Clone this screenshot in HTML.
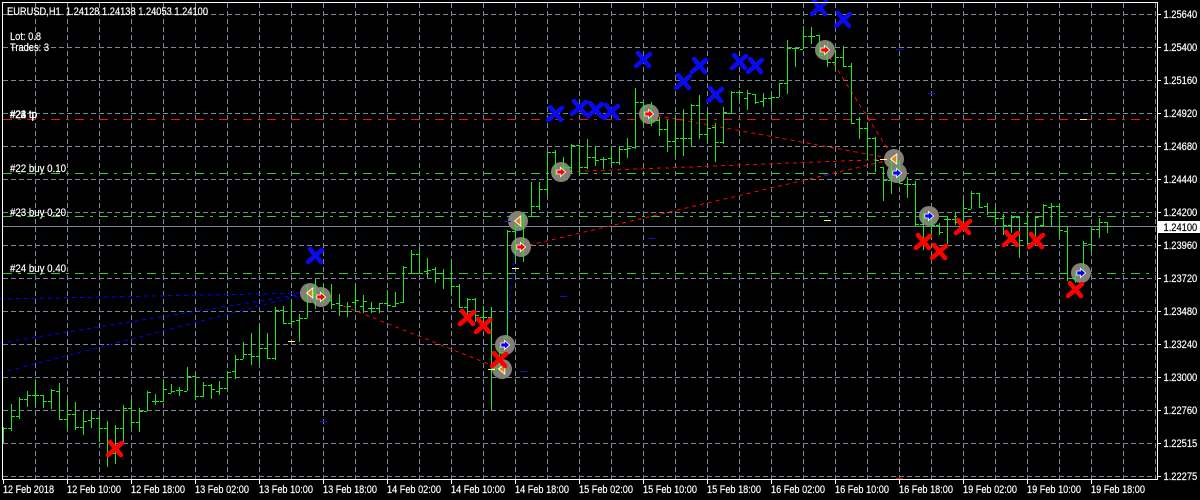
<!DOCTYPE html>
<html><head><meta charset="utf-8"><title>EURUSD,H1</title>
<style>
html,body{margin:0;padding:0;background:#000;width:1200px;height:500px;overflow:hidden}
svg{display:block}
text{font-family:"Liberation Sans",sans-serif;font-size:11px;fill:#fff;stroke:#fff;stroke-width:.2}
</style></head><body>
<svg xmlns="http://www.w3.org/2000/svg" width="1200" height="500" viewBox="0 0 1200 500">
<rect width="1200" height="500" fill="#000"/>
<defs>
<g id="xm"><path d="M-5,-7L6,6M7,-6L-7,6" fill="none" stroke-width="4.6" stroke-linecap="round"/></g>
<circle id="cc" r="10" fill="#857f76"/>
<path id="ra" d="M-4.2,-2H-0.5V-4.6L4.6,0L-0.5,4.6V2H-4.2Z" stroke="#fff" stroke-width="0.8"/>
<path id="la" d="M-3.4,0L2.8,-5V5Z" fill="#d98a10" stroke="#fff" stroke-width="0.9"/>
</defs>
<!-- grid -->
<g stroke="#778899" stroke-width="1" stroke-dasharray="5 3" shape-rendering="crispEdges" fill="none">
<path d="M3 14.5H1156M3 47.5H1156M3 80.5H1156M3 113.5H1156M3 146.5H1156M3 179.5H1156M3 212.5H1156M3 245.5H1156M3 278.5H1156M3 311.5H1156M3 344.5H1156M3 377.5H1156M3 410.5H1156M3 443.5H1156M3 476.5H1156"/>
<path d="M35.5 3V479M67.5 3V479M99.5 3V479M131.5 3V479M163.5 3V479M195.5 3V479M227.5 3V479M259.5 3V479M291.5 3V479M323.5 3V479M355.5 3V479M387.5 3V479M419.5 3V479M451.5 3V479M483.5 3V479M515.5 3V479M547.5 3V479M579.5 3V479M611.5 3V479M643.5 3V479M675.5 3V479M707.5 3V479M739.5 3V479M771.5 3V479M803.5 3V479M835.5 3V479M867.5 3V479M899.5 3V479M931.5 3V479M963.5 3V479M995.5 3V479M1027.5 3V479M1059.5 3V479M1091.5 3V479M1123.5 3V479M1155.5 3V479"/>
</g>
<!-- level lines -->
<g fill="none" stroke-width="1" shape-rendering="crispEdges" stroke-dasharray="9 6 3 6">
<path d="M3 119.5H1156" stroke="#f01010"/>
<path d="M3 173.5H1156M3 216.5H1156M3 273.5H1156" stroke="#32cd32"/>
</g>
<path d="M3 226.5H1157" stroke="#778899" fill="none" shape-rendering="crispEdges"/>
<!-- trend lines -->
<g fill="none" stroke-width="1" stroke-dasharray="4 4" shape-rendering="crispEdges">
<path stroke="#0000ff" d="M0 373L309 293M0 343L309 293M0 299L309 293M505 345L518 221"/>
<path stroke="#ff0000" d="M321 297L501 369M521 247L894 159M561 172L894 159M649 114L894 159M825 50L894 159"/>
</g>
<!-- marker discs -->
<use href="#cc" x="310" y="293"/><use href="#cc" x="321" y="297"/><use href="#cc" x="518" y="221"/><use href="#cc" x="521" y="247"/><use href="#cc" x="505" y="345"/><use href="#cc" x="502" y="369"/><use href="#cc" x="561" y="172"/><use href="#cc" x="649" y="114"/><use href="#cc" x="825" y="50"/><use href="#cc" x="894" y="159"/><use href="#cc" x="897" y="173"/><use href="#cc" x="929" y="216"/><use href="#cc" x="1081" y="273"/>
<!-- bars -->
<path fill="none" stroke="#1fe61f" stroke-width="1" shape-rendering="crispEdges" d="
M3.5 427V443M3.5 428.5H7
M11.5 404V431M8 428.5H11M11 416.5H15
M19.5 397V419M16 416.5H19M19 399.5H23
M27.5 391V407M24 399.5H27M27 395.5H31
M35.5 381V407M32 395.5H35M35 395.5H39
M43.5 395V408M40 395.5H43M43 401.5H47
M51.5 389V409M48 401.5H51M51 390.5H55
M59.5 383V419M56 391.5H59M59 419.5H63
M67.5 399V430M64 419.5H67M67 414.5H71
M75.5 402V430M72 414.5H75M75 427.5H79
M83.5 411V435M80 427.5H83M83 421.5H87
M91.5 411V428M88 420.5H91M91 418.5H95
M99.5 416V442M96 418.5H99M99 428.5H103
M107.5 421V467M104 428.5H107M107 443.5H111
M115.5 425V464M112 453.5H115M115 428.5H119
M123.5 405V443M120 428.5H123M123 408.5H127
M131.5 399V427M128 408.5H131M131 422.5H135
M139.5 408V432M136 422.5H139M139 411.5H143
M147.5 391V411M144 411.5H147M147 392.5H151
M155.5 394V405M152 401.5H155M155 401.5H159
M163.5 380V402M160 401.5H163M163 389.5H167
M171.5 384V393M168 393.5H171M171 391.5H175
M179.5 387V396M176 390.5H179M179 390.5H183
M187.5 367V391M184 391.5H187M187 376.5H191
M195.5 374V400M192 376.5H195M195 396.5H199
M203.5 382V397M200 396.5H203M203 385.5H207
M211.5 384V399M208 385.5H211M211 389.5H215
M219.5 381V395M216 391.5H219M219 388.5H223
M227.5 371V388M224 388.5H227M227 372.5H231
M235.5 355V379M232 371.5H235M235 359.5H239
M243.5 342V359M240 359.5H243M243 354.5H247
M251.5 333V365M248 354.5H251M251 356.5H255
M259.5 325V364M256 356.5H259M259 348.5H263
M267.5 333V359M264 348.5H267M267 358.5H271
M275.5 307V360M272 358.5H275M275 310.5H279
M283.5 306V323M280 310.5H283M283 323.5H287
M291.5 300V325M288 323.5H291M291 321.5H295
M299.5 314V342M296 320.5H299M299 318.5H303
M307.5 285V318M304 318.5H307M307 293.5H311
M315.5 279V309M312 293.5H315M315 297.5H319
M323.5 283V303M320 296.5H323M323 298.5H327
M331.5 284V309M328 300.5H331M331 304.5H335
M339.5 294V316M336 303.5H339M339 305.5H343
M347.5 302V317M344 311.5H347M347 306.5H351
M355.5 284V312M352 302.5H355M355 300.5H359
M363.5 295V313M360 306.5H363M363 301.5H367
M371.5 302V313M368 308.5H371M371 308.5H375
M379.5 303V313M376 308.5H379M379 303.5H383
M387.5 290V307M384 303.5H387M387 305.5H391
M395.5 292V307M392 306.5H395M395 303.5H399
M403.5 266V303M400 302.5H403M403 267.5H407
M411.5 250V273M408 273.5H411M411 254.5H415
M419.5 248V273M416 254.5H419M419 273.5H423
M427.5 258V278M424 271.5H427M427 270.5H431
M435.5 267V283M432 269.5H435M435 278.5H439
M443.5 269V289M440 273.5H443M443 278.5H447
M451.5 259V295M448 278.5H451M451 286.5H455
M459.5 284V308M456 286.5H459M459 307.5H463
M467.5 298V317M464 307.5H467M467 299.5H471
M475.5 298V322M472 299.5H475M475 315.5H479
M483.5 306V327M480 317.5H483M483 317.5H487
M491.5 307V410M488 317.5H491M491 368.5H495
M499.5 347V370M496 368.5H499M499 352.5H503
M507.5 230V337M504 337.5H507M507 231.5H511
M515.5 224V262M512 231.5H515M515 226.5H519
M523.5 212V262M520 226.5H523M523 217.5H527
M531.5 182V217M528 216.5H531M531 206.5H535
M539.5 182V210M536 206.5H539M539 189.5H543
M547.5 152V196M544 189.5H547M547 152.5H551
M555.5 150V175M552 152.5H555M555 172.5H559
M563.5 157V172M560 172.5H563M563 167.5H567
M571.5 144V173M568 167.5H571M571 145.5H575
M579.5 145V175M576 145.5H579M579 167.5H583
M587.5 139V169M584 167.5H587M587 157.5H591
M595.5 146V166M592 157.5H595M595 160.5H599
M603.5 157V169M600 159.5H603M603 159.5H607
M611.5 147V167M608 158.5H611M611 162.5H615
M619.5 147V165M616 162.5H619M619 149.5H623
M627.5 138V158M624 149.5H627M627 148.5H631
M635.5 88V149M632 147.5H635M635 102.5H639
M643.5 102V124M640 102.5H643M643 106.5H647
M651.5 102V126M648 113.5H651M651 120.5H655
M659.5 117V136M656 120.5H659M659 129.5H663
M667.5 120V152M664 129.5H667M667 141.5H671
M675.5 117V157M672 141.5H675M675 138.5H679
M683.5 109V156M680 138.5H683M683 138.5H687
M691.5 104V147M688 138.5H691M691 105.5H695
M699.5 95V139M696 105.5H699M699 134.5H703
M707.5 112V143M704 134.5H707M707 128.5H711
M715.5 123V162M712 127.5H715M715 142.5H719
M723.5 107V144M720 142.5H723M723 112.5H727
M731.5 91V114M728 113.5H731M731 92.5H735
M739.5 90V101M736 92.5H739M739 92.5H743
M747.5 90V110M744 98.5H747M747 93.5H751
M755.5 94V104M752 94.5H755M755 102.5H759
M763.5 93V107M760 101.5H763M763 98.5H767
M771.5 93V107M768 98.5H771M771 97.5H775
M779.5 83V97M776 97.5H779M779 83.5H783
M787.5 40V94M784 83.5H787M787 48.5H791
M795.5 47V67M792 48.5H795M795 48.5H799
M803.5 26V49M800 49.5H803M803 36.5H807
M811.5 27V44M808 36.5H811M811 36.5H815
M819.5 35V55M816 35.5H819M819 55.5H823
M827.5 42V67M824 53.5H827M827 62.5H831
M835.5 50V71M832 62.5H835M835 57.5H839
M843.5 46V67M840 57.5H843M843 66.5H847
M851.5 63V123M848 66.5H851M851 123.5H855
M859.5 117V139M856 119.5H859M859 128.5H863
M867.5 122V160M864 128.5H867M867 138.5H871
M875.5 137V172M872 138.5H875M875 160.5H879
M883.5 167V201M880 167.5H883M883 180.5H887
M891.5 157V194M888 180.5H891M891 173.5H895
M899.5 160V184M896 173.5H899M899 183.5H903
M907.5 177V198M904 184.5H907M907 184.5H911
M915.5 181V226M912 184.5H915M915 224.5H919
M923.5 213V250M920 224.5H923M923 217.5H927
M931.5 217V240M928 217.5H931M931 225.5H935
M939.5 223V235M936 225.5H939M939 232.5H943
M947.5 217V244M944 219.5H947M947 219.5H951
M955.5 212V225M952 219.5H955M955 222.5H959
M963.5 200V225M960 223.5H963M963 208.5H967
M971.5 191V209M968 209.5H971M971 193.5H975
M979.5 193V207M976 193.5H979M979 207.5H983
M987.5 203V215M984 206.5H987M987 212.5H991
M995.5 207V225M992 212.5H995M995 218.5H999
M1003.5 214V235M1000 218.5H1003M1003 225.5H1007
M1011.5 215V233M1008 225.5H1011M1011 217.5H1015
M1019.5 216V258M1016 217.5H1019M1019 240.5H1023
M1027.5 212V244M1024 223.5H1027M1027 243.5H1031
M1035.5 216V245M1032 243.5H1035M1035 217.5H1039
M1043.5 204V227M1040 225.5H1043M1043 205.5H1047
M1051.5 203V226M1048 207.5H1051M1051 206.5H1055
M1059.5 204V238M1056 206.5H1059M1059 230.5H1063
M1067.5 226V281M1064 231.5H1067M1067 278.5H1071
M1075.5 273V283M1072 278.5H1075M1075 274.5H1079
M1083.5 241V273M1080 272.5H1083M1083 243.5H1087
M1091.5 229V253M1088 244.5H1091M1091 229.5H1095
M1099.5 218V238M1096 229.5H1099M1099 222.5H1103
M1107.5 222V233M1104 222.5H1107M1107 226.5H1111
"/>
<!-- small ticks -->
<g fill="none" shape-rendering="crispEdges">
<path stroke="#ffff66" d="M288 341.5H295M488 369.5H495M512 268.5H519M824 220.5H831M880 159.5H887M1080 119.5H1087"/>
<path stroke="#1010d0" d="M320 421.5H327M504 221.5H511M520 371.5H527M560 296.5H567M648 238.5H655M896 49.5H903M928 93.5H935M823 174.5H830"/>
<path stroke="#ff0000" d="M896 478.5H903"/>
</g>
<!-- marker arrows -->
<use href="#la" x="310" y="293"/>
<use href="#ra" x="321" y="297" fill="#ff0000"/>
<use href="#la" x="518" y="221"/>
<use href="#ra" x="521" y="247" fill="#ff0000"/>
<use href="#ra" x="505" y="345" fill="#0000ff"/>
<use href="#la" x="502" y="369"/>
<use href="#ra" x="561" y="172" fill="#ff0000"/>
<use href="#ra" x="649" y="114" fill="#ff0000"/>
<use href="#ra" x="825" y="50" fill="#ff0000"/>
<use href="#la" x="894" y="159"/>
<use href="#ra" x="897" y="173" fill="#0000ff"/>
<use href="#ra" x="929" y="216" fill="#0000ff"/>
<use href="#ra" x="1081" y="273" fill="#0000ff"/>
<!-- crosses -->
<g stroke="#0a0aee">
<use href="#xm" x="315" y="256"/><use href="#xm" x="555" y="114"/><use href="#xm" x="579" y="108"/><use href="#xm" x="595" y="110"/><use href="#xm" x="611" y="112"/><use href="#xm" x="643" y="60"/><use href="#xm" x="683" y="82"/><use href="#xm" x="699" y="66"/><use href="#xm" x="715" y="95"/><use href="#xm" x="739" y="62"/><use href="#xm" x="755" y="66"/><use href="#xm" x="819" y="8"/><use href="#xm" x="843" y="20"/>
</g>
<g stroke="#ff0000">
<use href="#xm" x="115" y="449"/><use href="#xm" x="467" y="318"/><use href="#xm" x="483" y="326"/><use href="#xm" x="499" y="360"/><use href="#xm" x="923" y="242"/><use href="#xm" x="939" y="252"/><use href="#xm" x="963" y="227"/><use href="#xm" x="1011" y="239"/><use href="#xm" x="1036" y="241"/><use href="#xm" x="1075" y="290"/>
</g>
<!-- frame -->
<g fill="none" stroke="#fff" shape-rendering="crispEdges">
<path d="M2.5 2V479.5H1157.5V2.5H2.5"/>
<path d="M1158 14.5H1161M1158 47.5H1161M1158 80.5H1161M1158 113.5H1161M1158 146.5H1161M1158 179.5H1161M1158 212.5H1161M1158 245.5H1161M1158 278.5H1161M1158 311.5H1161M1158 344.5H1161M1158 377.5H1161M1158 410.5H1161M1158 443.5H1161M1158 476.5H1161"/>
<path d="M3.5 480V484M67.5 480V484M131.5 480V484M195.5 480V484M259.5 480V484M323.5 480V484M387.5 480V484M451.5 480V484M515.5 480V484M579.5 480V484M643.5 480V484M707.5 480V484M771.5 480V484M835.5 480V484M899.5 480V484M963.5 480V484M1027.5 480V484M1091.5 480V484"/>
</g>
<!-- text -->
<text x="7" y="15" xml:space="preserve" textLength="201" lengthAdjust="spacingAndGlyphs">EURUSD,H1  1.24128 1.24138 1.24053 1.24100</text>
<text x="10" y="40" textLength="31" lengthAdjust="spacingAndGlyphs">Lot: 0.8</text>
<text x="10" y="51" textLength="39" lengthAdjust="spacingAndGlyphs">Trades: 3</text>
<text x="10" y="118" textLength="27" lengthAdjust="spacingAndGlyphs">#22 tp</text><text x="10" y="118" textLength="27" lengthAdjust="spacingAndGlyphs">#23 tp</text><text x="10" y="118" textLength="27" lengthAdjust="spacingAndGlyphs">#24 tp</text>
<text x="10" y="172" textLength="56" lengthAdjust="spacingAndGlyphs">#22 buy 0.10</text>
<text x="10" y="216" textLength="56" lengthAdjust="spacingAndGlyphs">#23 buy 0.20</text>
<text x="10" y="272" textLength="56" lengthAdjust="spacingAndGlyphs">#24 buy 0.40</text>
<g transform="translate(1163.5,0) scale(0.85,1)">
<text x="0" y="18">1.25640</text><text x="0" y="51">1.25400</text><text x="0" y="84">1.25160</text><text x="0" y="117">1.24920</text><text x="0" y="150">1.24680</text><text x="0" y="183">1.24440</text><text x="0" y="216">1.24200</text><text x="0" y="249">1.23960</text><text x="0" y="282">1.23720</text><text x="0" y="315">1.23480</text><text x="0" y="348">1.23240</text><text x="0" y="381">1.23000</text><text x="0" y="414">1.22760</text><text x="0" y="447">1.22515</text><text x="0" y="480">1.22275</text>
</g>
<rect x="1158" y="221" width="42" height="12" fill="#fff"/>
<g transform="translate(1163.5,0) scale(0.85,1)"><text x="0" y="231" style="fill:#000;stroke:#000">1.24100</text></g>
<g>
<text x="3" y="493" textLength="51" lengthAdjust="spacingAndGlyphs">12 Feb 2018</text>
<text x="67" y="493" textLength="54" lengthAdjust="spacingAndGlyphs">12 Feb 10:00</text>
<text x="131" y="493" textLength="54" lengthAdjust="spacingAndGlyphs">12 Feb 18:00</text>
<text x="195" y="493" textLength="54" lengthAdjust="spacingAndGlyphs">13 Feb 02:00</text>
<text x="259" y="493" textLength="54" lengthAdjust="spacingAndGlyphs">13 Feb 10:00</text>
<text x="323" y="493" textLength="54" lengthAdjust="spacingAndGlyphs">13 Feb 18:00</text>
<text x="387" y="493" textLength="54" lengthAdjust="spacingAndGlyphs">14 Feb 02:00</text>
<text x="451" y="493" textLength="54" lengthAdjust="spacingAndGlyphs">14 Feb 10:00</text>
<text x="515" y="493" textLength="54" lengthAdjust="spacingAndGlyphs">14 Feb 18:00</text>
<text x="579" y="493" textLength="54" lengthAdjust="spacingAndGlyphs">15 Feb 02:00</text>
<text x="643" y="493" textLength="54" lengthAdjust="spacingAndGlyphs">15 Feb 10:00</text>
<text x="707" y="493" textLength="54" lengthAdjust="spacingAndGlyphs">15 Feb 18:00</text>
<text x="771" y="493" textLength="54" lengthAdjust="spacingAndGlyphs">16 Feb 02:00</text>
<text x="835" y="493" textLength="54" lengthAdjust="spacingAndGlyphs">16 Feb 10:00</text>
<text x="899" y="493" textLength="54" lengthAdjust="spacingAndGlyphs">16 Feb 18:00</text>
<text x="963" y="493" textLength="54" lengthAdjust="spacingAndGlyphs">19 Feb 02:00</text>
<text x="1027" y="493" textLength="54" lengthAdjust="spacingAndGlyphs">19 Feb 10:00</text>
<text x="1091" y="493" textLength="54" lengthAdjust="spacingAndGlyphs">19 Feb 18:00</text>
</g>
</svg>
</body></html>
